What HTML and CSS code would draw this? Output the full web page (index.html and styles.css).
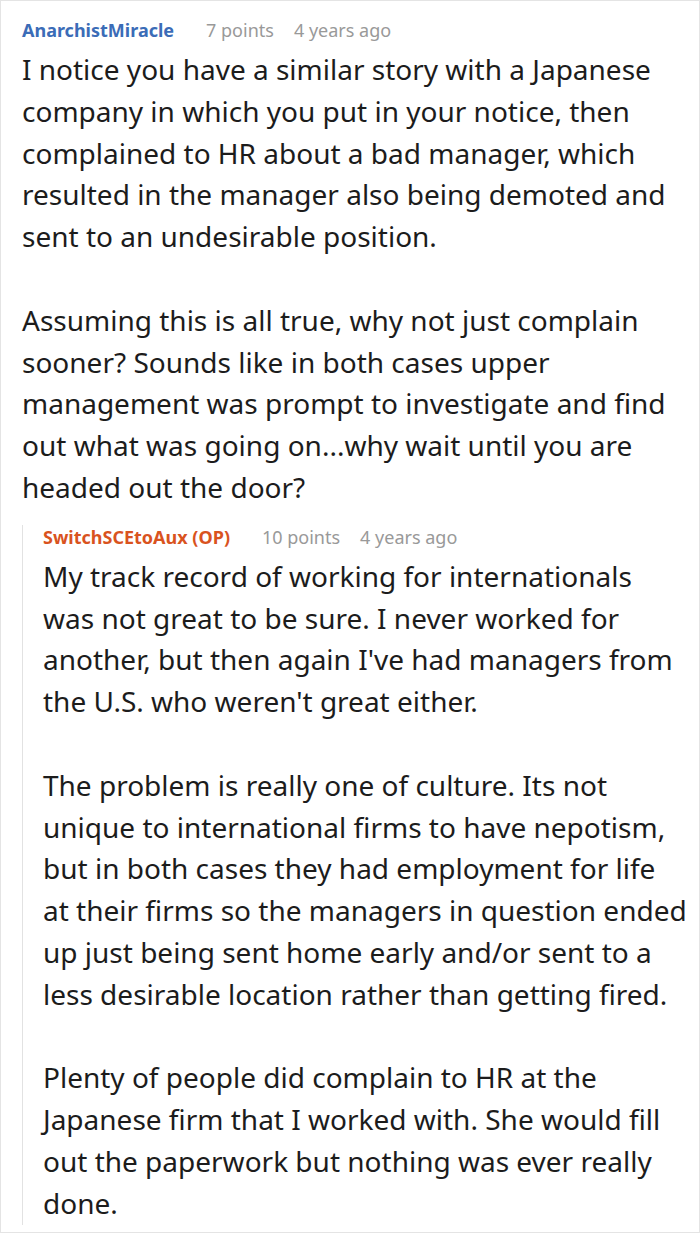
FILE: index.html
```html
<!DOCTYPE html>
<html>
<head>
<meta charset="utf-8">
<link rel="stylesheet" href="styles.css">
</head>
<body>
<div class="card">
  <div class="comment">
    <div class="head">
      <span class="user">AnarchistMiracle</span>
      <span class="points">7 points</span>
      <span class="age">4 years ago</span>
    </div>
    <div class="body">
      <p>I notice you have a similar story with a Japanese company in which you put in your notice, then complained to HR about a bad manager, which resulted in the manager also being demoted and sent to an undesirable position.</p>
      <p>Assuming this is all true, why not just complain sooner? Sounds like in both cases upper management was prompt to investigate and find out what was going on...why wait until you are headed out the door?</p>
    </div>
    <div class="reply">
      <div class="head">
        <span class="user op">SwitchSCEtoAux (OP)</span>
        <span class="points">10 points</span>
        <span class="age">4 years ago</span>
      </div>
      <div class="body">
        <p>My track record of working for internationals was not great to be sure. I never worked for another, but then again I've had managers from the U.S. who weren't great either.</p>
        <p>The problem is really one of culture. Its not unique to international firms to have nepotism, but in both cases they had employment for life at their firms so the managers in question ended up just being sent home early and/or sent to a less desirable location rather than getting fired.</p>
        <p>Plenty of people did complain to HR at the Japanese firm that I worked with. She would fill out the paperwork but nothing was ever really done.</p>
      </div>
    </div>
  </div>
</div>
</body>
</html>
```

FILE: styles.css
```css
html, body {
  margin: 0;
  padding: 0;
  background: #fff;
}
body {
  font-family: "Noto Sans", "Open Sans", sans-serif;
  color: #1c1c1c;
}
.card {
  box-sizing: border-box;
  width: 700px;
  height: 1233px;
  border: 1px solid #e4e4e4;
  overflow: hidden;
}
.comment {
  padding: 17px 12px 0 21px;
}
.head {
  display: flex;
  align-items: baseline;
  font-size: 18px;
  line-height: 24px;
  margin-bottom: 7px;
}
.user {
  font-weight: 700;
  color: #3b6cb7;
  margin-right: 32px;
}
.user.op {
  color: #d9531e;
}
.points, .age {
  color: #999;
}
.points {
  margin-right: 20px;
}
.body p {
  margin: 0 0 41.8px 0;
  font-size: 28px;
  line-height: 41.8px;
}
.body p:last-child {
  margin-bottom: 0;
}
.reply {
  margin-top: 26px;
  border-left: 1px solid #e2e2e2;
  padding-left: 20px;
}
.reply .head {
  margin-top: -10px;
}
.reply .body p:last-child {
  margin-bottom: -10px;
}
```
